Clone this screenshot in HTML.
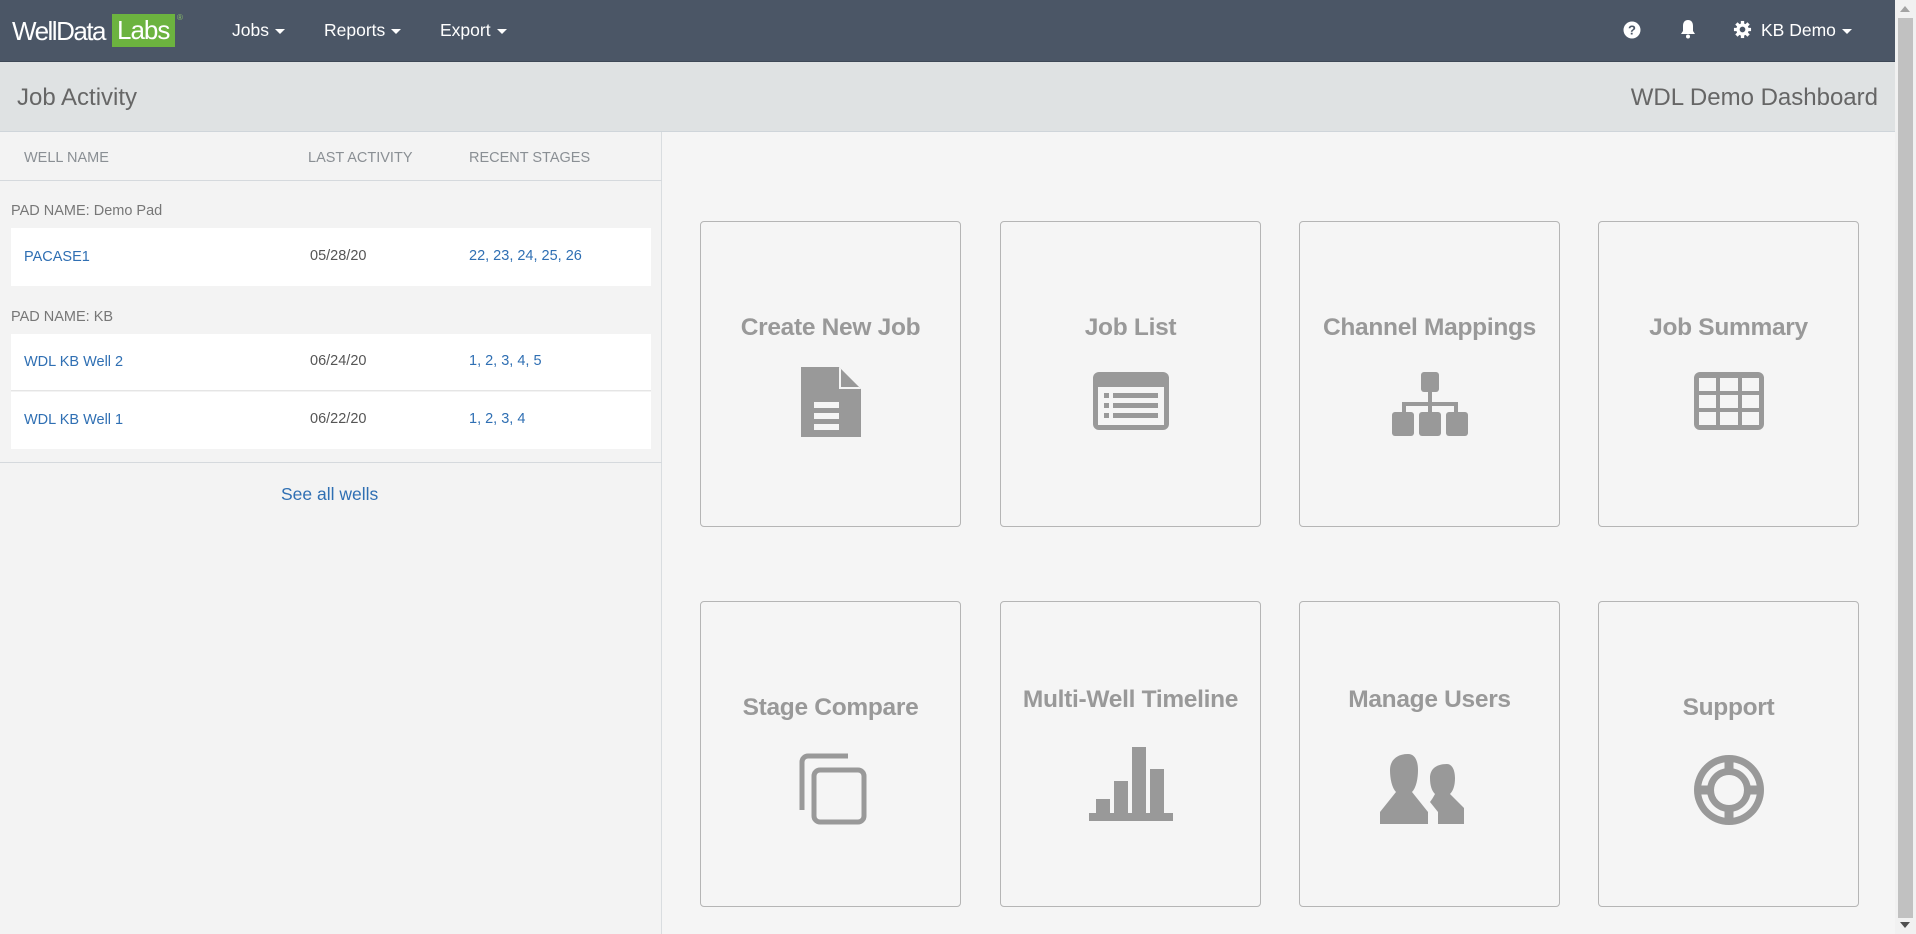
<!DOCTYPE html>
<html><head><meta charset="utf-8"><style>
*{box-sizing:border-box;margin:0;padding:0}
body{width:1916px;height:934px;overflow:hidden;background:#f5f5f5;font-family:"Liberation Sans",Arial,sans-serif;position:relative}
.abs{position:absolute}
.nav{left:0;top:0;width:1895px;height:62px;background:#4b5666;border-bottom:1px solid #3e4856}
.nav .m{color:#fff;font-size:17.5px;top:20px}
.caret{display:inline-block;border-left:5px solid transparent;border-right:5px solid transparent;border-top:5px solid #fff;vertical-align:middle;margin-left:6px}
.hdr{left:0;top:62px;width:1895px;height:70px;background:#dfe2e3;border-bottom:1px solid #cfd5da}
.left{left:0;top:132px;width:662px;height:802px;background:#f3f3f3;border-right:1px solid #d9dde0}
.th{color:#8a8f94;font-size:14.5px;top:150px}
.pad{color:#777;font-size:14.5px;left:11px}
.row{left:11px;width:640px;background:#fff}
.row span{position:absolute;font-size:14.5px}
.lnk{color:#2f6fb3}
.dt{color:#555}
.card{width:261px;height:306px;border:1px solid #b5b5b5;border-radius:4px;background:#f5f5f5;text-align:center}
.card .t{position:absolute;left:0;right:0;color:#999;font-weight:bold;font-size:24.5px;letter-spacing:-0.3px}
.card svg{position:absolute;left:50%;transform:translateX(-50%)}
.sb{left:1895px;top:0;width:21px;height:934px;background:#f1f1f1}
</style></head><body>
<div class="abs nav">
  <div class="abs" style="left:12px;top:15px;height:32px;font-size:26px;color:#fff;letter-spacing:-1.5px;line-height:32px">WellData</div>
  <div class="abs" style="left:112px;top:14px;width:63px;height:33px;background:#6cb33f;color:#fff;font-size:26px;letter-spacing:-1px;line-height:33px;padding-left:5px">Labs</div>
  <div class="abs" style="left:177px;top:13px;color:#8bc46a;font-size:8px">®</div>
  <div class="abs m" style="left:232px">Jobs<span class="caret"></span></div>
  <div class="abs m" style="left:324px">Reports<span class="caret"></span></div>
  <div class="abs m" style="left:440px">Export<span class="caret"></span></div>
  <svg class="abs" style="left:1623px;top:21px" width="18" height="18" viewBox="0 0 18 18"><circle cx="9" cy="9" r="8.5" fill="#fff"/><text x="9" y="13.5" font-size="13" font-weight="bold" text-anchor="middle" fill="#4b5666" font-family="Liberation Sans">?</text></svg>
  <svg class="abs" style="left:1680px;top:19px" width="16" height="20" viewBox="0 0 16 20"><path d="M8 1c-3 0-5 2-5 6v5l-2 3h14l-2-3V7c0-4-2-6-5-6z" fill="#fff"/><circle cx="8" cy="17.5" r="2" fill="#fff"/></svg>
  <svg class="abs" style="left:1733px;top:20px" width="19" height="19" viewBox="0 0 20 20"><g fill="#fff"><circle cx="10" cy="10" r="6.5"/><g stroke="#fff" stroke-width="3.5"><line x1="10" y1="1" x2="10" y2="19"/><line x1="1" y1="10" x2="19" y2="10"/><line x1="3.6" y1="3.6" x2="16.4" y2="16.4"/><line x1="16.4" y1="3.6" x2="3.6" y2="16.4"/></g></g><circle cx="10" cy="10" r="3" fill="#4b5666"/></svg>
  <div class="abs m" style="left:1761px">KB Demo<span class="caret"></span></div>
</div>
<div class="abs hdr">
  <div class="abs" style="left:17px;top:22px;font-size:24px;color:#666">Job Activity</div>
  <div class="abs" style="right:17px;top:22px;font-size:24px;color:#666">WDL Demo Dashboard</div>
</div>
<div class="abs left"></div>
<div class="abs th" style="left:24px">WELL NAME</div>
<div class="abs th" style="left:308px">LAST ACTIVITY</div>
<div class="abs th" style="left:469px">RECENT STAGES</div>
<div class="abs" style="left:0;top:180px;width:662px;height:1px;background:#d5d9dd"></div>
<div class="abs pad" style="top:203px">PAD NAME: Demo Pad</div>
<div class="abs row" style="top:228px;height:58px"><span class="lnk" style="left:13px;top:21px">PACASE1</span><span class="dt" style="left:299px;top:20px">05/28/20</span><span class="lnk" style="left:458px;top:20px">22, 23, 24, 25, 26</span></div>
<div class="abs pad" style="top:309px">PAD NAME: KB</div>
<div class="abs row" style="top:334px;height:57px;border-bottom:1px solid #e5e5e5"><span class="lnk" style="left:13px;top:20px">WDL KB Well 2</span><span class="dt" style="left:299px;top:19px">06/24/20</span><span class="lnk" style="left:458px;top:19px">1, 2, 3, 4, 5</span></div>
<div class="abs row" style="top:392px;height:57px"><span class="lnk" style="left:13px;top:20px">WDL KB Well 1</span><span class="dt" style="left:299px;top:19px">06/22/20</span><span class="lnk" style="left:458px;top:19px">1, 2, 3, 4</span></div>
<div class="abs" style="left:0;top:462px;width:662px;height:1px;background:#d5d9dd"></div>
<div class="abs lnk" style="left:281px;top:484px;font-size:17.5px">See all wells</div>

<div class="abs card" style="left:700px;top:221px"><div class="t" style="top:92px">Create New Job</div>
<svg style="top:145px" width="64" height="72" viewBox="0 0 64 72"><path d="M2 0h38l22 22v48H2z" fill="#999"/><path d="M40 0v22h22z" fill="#f5f5f5"/><path d="M42 2l18 18H42z" fill="#999"/><rect x="15" y="35" width="25" height="6" fill="#f5f5f5"/><rect x="15" y="46" width="25" height="6" fill="#f5f5f5"/><rect x="15" y="57" width="25" height="6" fill="#f5f5f5"/></svg></div>
<div class="abs card" style="left:1000px;top:221px"><div class="t" style="top:92px">Job List</div>
<svg style="top:150px" width="76" height="58" viewBox="0 0 76 58"><rect x="0" y="0" width="76" height="58" rx="6" fill="#999"/><rect x="5" y="15" width="66" height="38" fill="#f5f5f5"/><g fill="#999"><rect x="11" y="21" width="5" height="5"/><rect x="20" y="21" width="45" height="5"/><rect x="11" y="31" width="5" height="5"/><rect x="20" y="31" width="45" height="5"/><rect x="11" y="41" width="5" height="5"/><rect x="20" y="41" width="45" height="5"/></g></svg></div>
<div class="abs card" style="left:1299px;top:221px"><div class="t" style="top:92px">Channel Mappings</div>
<svg style="top:150px" width="76" height="64" viewBox="0 0 76 64"><g fill="#999"><rect x="29" y="0" width="18" height="20" rx="3"/><rect x="36" y="20" width="4" height="12"/><rect x="10" y="30" width="56" height="4"/><rect x="10" y="30" width="4" height="10"/><rect x="62" y="30" width="4" height="10"/><rect x="36" y="30" width="4" height="10"/><rect x="0" y="40" width="22" height="24" rx="3"/><rect x="27" y="40" width="22" height="24" rx="3"/><rect x="54" y="40" width="22" height="24" rx="3"/></g></svg></div>
<div class="abs card" style="left:1598px;top:221px"><div class="t" style="top:92px">Job Summary</div>
<svg style="top:150px" width="70" height="58" viewBox="0 0 70 58"><rect width="70" height="58" rx="6" fill="#999"/><g fill="#f5f5f5"><rect x="5" y="6" width="17" height="13"/><rect x="26" y="6" width="18" height="13"/><rect x="48" y="6" width="17" height="13"/><rect x="5" y="23" width="17" height="13"/><rect x="26" y="23" width="18" height="13"/><rect x="48" y="23" width="17" height="13"/><rect x="5" y="40" width="17" height="13"/><rect x="26" y="40" width="18" height="13"/><rect x="48" y="40" width="17" height="13"/></g></svg></div>

<div class="abs card" style="left:700px;top:601px"><div class="t" style="top:92px">Stage Compare</div>
<svg style="top:150px" width="74" height="74" viewBox="0 0 74 74"><g fill="none" stroke="#999" stroke-width="5"><path d="M8 58V10a6 6 0 0 1 6-6h40"/><rect x="20" y="18" width="50" height="52" rx="6"/></g></svg></div>
<div class="abs card" style="left:1000px;top:601px"><div class="t" style="top:84px">Multi-Well Timeline</div>
<svg style="top:145px" width="84" height="74" viewBox="0 0 84 74"><g fill="#999"><rect x="0" y="66" width="84" height="8"/><rect x="7" y="52" width="14" height="14"/><rect x="25" y="34" width="14" height="32"/><rect x="43" y="0" width="14" height="66"/><rect x="61" y="22" width="14" height="44"/></g></svg></div>
<div class="abs card" style="left:1299px;top:601px"><div class="t" style="top:84px">Manage Users</div>
<svg style="top:152px" width="100" height="70" viewBox="0 0 100 70"><g fill="#999"><path d="M28 0c7 0 10 7 10 16s-2 18-6 22l16 20v12H0V58l16-20c-4-4-6-13-6-22S16 0 28 0z"/><path d="M67 10c5 0 8 6 8 14s-2 13-5 16l14 14v16H58V58l-8-10c3-4 5-8 5-8-3-3-5-8-5-16s5-14 17-14z"/></g></svg></div>
<div class="abs card" style="left:1598px;top:601px"><div class="t" style="top:92px">Support</div>
<svg style="top:150px" width="76" height="76" viewBox="0 0 76 76"><circle cx="38" cy="38" r="35" fill="#999"/><circle cx="38" cy="38" r="28" fill="#f5f5f5"/><circle cx="38" cy="38" r="22" fill="#999"/><circle cx="38" cy="38" r="15" fill="#f5f5f5"/><g stroke="#999" stroke-width="9"><line x1="38" y1="5" x2="38" y2="24"/><line x1="38" y1="52" x2="38" y2="71"/><line x1="5" y1="38" x2="24" y2="38"/><line x1="52" y1="38" x2="71" y2="38"/></g><circle cx="38" cy="38" r="15" fill="#f5f5f5"/></svg></div>

<div class="abs sb"><div class="abs" style="left:5px;top:6px;border-left:5px solid transparent;border-right:5px solid transparent;border-bottom:6px solid #a3a3a3"></div><div class="abs" style="left:3px;top:18px;width:15px;height:900px;background:#c1c1c1"></div><div class="abs" style="left:5px;top:922px;border-left:5px solid transparent;border-right:5px solid transparent;border-top:6px solid #505050"></div></div>
</body></html>
